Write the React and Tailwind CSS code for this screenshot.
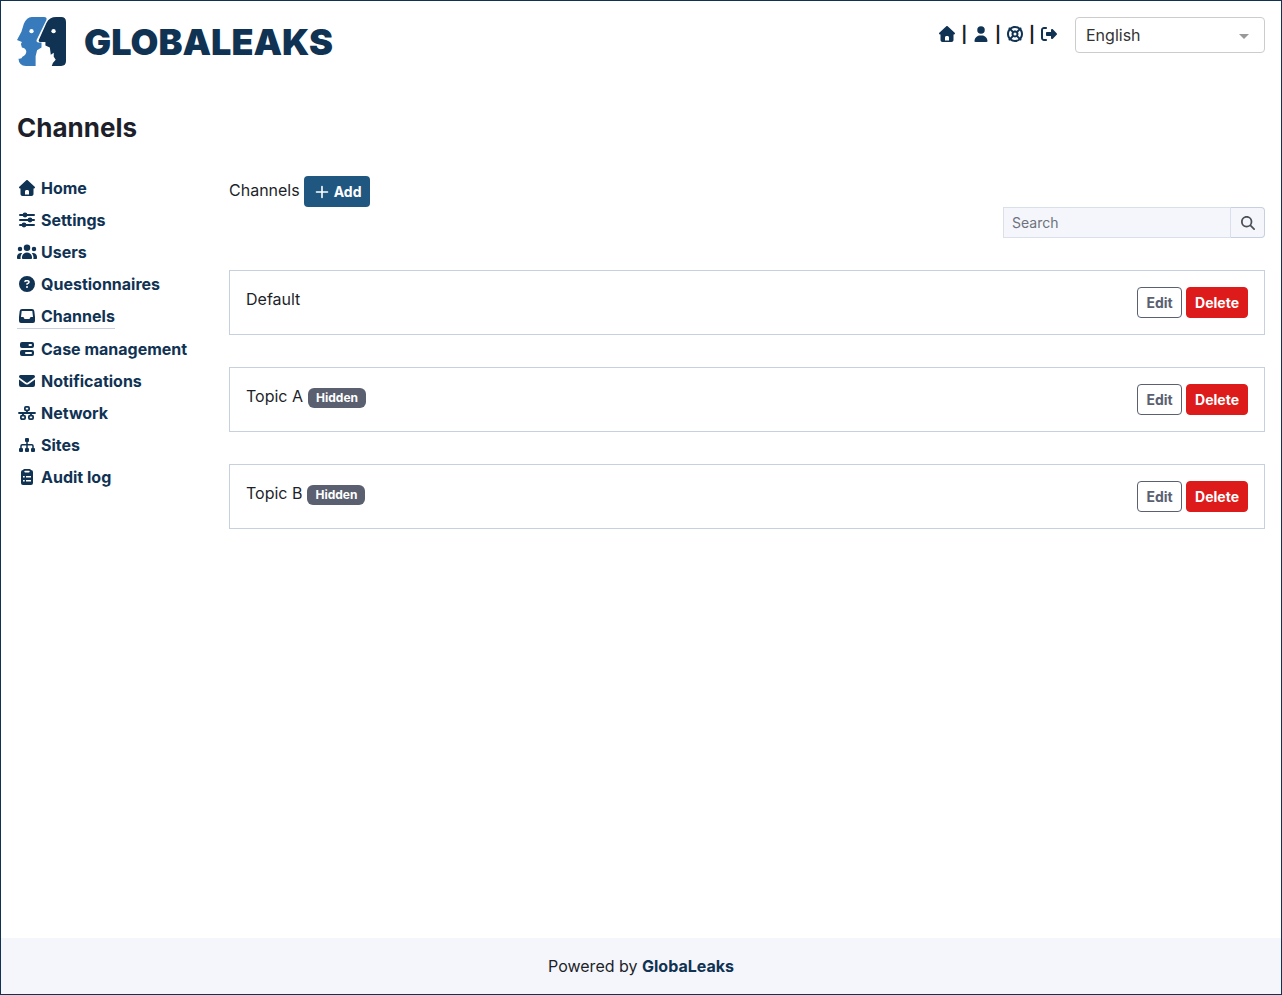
import React from "react";
import { FaCircleQuestion, FaLifeRing, FaRightFromBracket, FaMagnifyingGlass } from "react-icons/fa6";

function HouseIcon() {
  return (
    <svg viewBox="0 0 512 512" fill="currentColor" aria-hidden="true" className="size-4">
      <path d="M277.8 8.6c-12.3-11.4-31.3-11.4-43.5 0l-224 208c-9.6 9-12.8 22.9-8 35.1S18.8 272 32 272l16 0 0 176c0 35.3 28.7 64 64 64l288 0c35.3 0 64-28.7 64-64l0-176 16 0c13.2 0 25-8.1 29.8-20.3s1.6-26.2-8-35.1l-224-208zM240 320l32 0c26.5 0 48 21.5 48 48l0 96-128 0 0-96c0-26.5 21.5-48 48-48z" />
    </svg>
  );
}

function UserIcon() {
  return (
    <svg viewBox="-32 0 512 512" fill="currentColor" aria-hidden="true" className="size-4">
      <path d="M224 248a120 120 0 1 0 0-240 120 120 0 1 0 0 240zm-29.7 56C95.8 304 16 383.8 16 482.3 16 498.7 29.3 512 45.7 512l356.6 0c16.4 0 29.7-13.3 29.7-29.7 0-98.5-79.8-178.3-178.3-178.3l-59.4 0z" />
    </svg>
  );
}

function UsersIcon() {
  return (
    <svg viewBox="0 0 640 512" fill="currentColor" aria-hidden="true" className="h-4 w-5">
      <path d="M320 16a104 104 0 1 1 0 208 104 104 0 1 1 0-208zM96 88a72 72 0 1 1 0 144 72 72 0 1 1 0-144zM0 416c0-70.7 57.3-128 128-128 12.8 0 25.2 1.9 36.9 5.4-32.9 36.8-52.9 85.4-52.9 138.6l0 16c0 11.4 2.4 22.2 6.7 32L32 480c-17.7 0-32-14.3-32-32l0-32zm521.3 64c4.3-9.8 6.7-20.6 6.7-32l0-16c0-53.2-20-101.8-52.9-138.6 11.7-3.5 24.1-5.4 36.9-5.4 70.7 0 128 57.3 128 128l0 32c0 17.7-14.3 32-32 32l-86.7 0zM472 160a72 72 0 1 1 144 0 72 72 0 1 1 -144 0zM160 432c0-88.4 71.6-160 160-160s160 71.6 160 160l0 16c0 17.7-14.3 32-32 32l-256 0c-17.7 0-32-14.3-32-32l0-16z" />
    </svg>
  );
}

function SlidersIcon() {
  return (
    <svg viewBox="0 0 16 16" fill="currentColor" aria-hidden="true" className="size-4">
      <path d="M1 3h14M1 8h14M1 13h14" stroke="currentColor" strokeWidth="2" strokeLinecap="round" />
      <circle cx="6" cy="3" r="2.400" />
      <circle cx="11" cy="8" r="2.400" />
      <circle cx="5" cy="13" r="2.400" />
    </svg>
  );
}

function InboxIcon() {
  return (
    <svg viewBox="0 0 16 16" fill="currentColor" aria-hidden="true" className="size-4">
      <path
        fillRule="evenodd"
        d="M3 1H13Q15 1 15.300 3L16 9V13Q16 15 14 15H2Q0 15 0 13V9L.7 3Q1 1 3 1ZM2.700 3L2 9H4.400L5.600 11H10.400L11.600 9H14L13.300 3Z"
      />
    </svg>
  );
}

function ServerIcon() {
  return (
    <svg viewBox="0 0 14 16" fill="currentColor" aria-hidden="true" className="h-4 w-[14px]">
      <path
        fillRule="evenodd"
        d="M2 1H12Q14 1 14 3V5Q14 7 12 7H2Q0 7 0 5V3Q0 1 2 1ZM9.500 3Q8.500 3 8.500 4Q8.500 5 9.500 5H11Q12 5 12 4Q12 3 11 3ZM2 9H12Q14 9 14 11V13Q14 15 12 15H2Q0 15 0 13V11Q0 9 2 9ZM6 11Q5 11 5 12Q5 13 6 13H11Q12 13 12 12Q12 11 11 11Z"
      />
    </svg>
  );
}

function EnvelopeIcon() {
  return (
    <svg viewBox="0 0 16 16" fill="currentColor" aria-hidden="true" className="size-4">
      <path d="M1.500 2H14.500Q16 2 16 3.500Q16 4.200 15.400 4.700L8.900 9.500Q8 10.100 7.100 9.500L.6 4.700Q0 4.200 0 3.500Q0 2 1.500 2ZM0 6.400L6.200 10.900Q8 12 9.800 10.900L16 6.400V12Q16 14 14 14H2Q0 14 0 12Z" />
    </svg>
  );
}

function NetworkIcon() {
  return (
    <svg viewBox="0 0 18 16" fill="none" stroke="currentColor" aria-hidden="true" className="h-4 w-[18px]">
      <path d="M1 8H17" strokeWidth="1.800" strokeLinecap="round" />
      <path d="M9 5.500V8M5 8V10.500M13 8V10.500" strokeWidth="1.800" />
      <rect x="6.900" y="1.900" width="4.200" height="3.400" rx="1" strokeWidth="1.800" />
      <rect x="2.900" y="10.700" width="4.200" height="3.400" rx="1" strokeWidth="1.800" />
      <rect x="10.900" y="10.700" width="4.200" height="3.400" rx="1" strokeWidth="1.800" />
    </svg>
  );
}

function SitemapIcon() {
  return (
    <svg viewBox="0 0 16 16" fill="currentColor" aria-hidden="true" className="size-4">
      <path
        d="M8 4V12M2 12V9Q2 7.800 3.200 7.800H12.800Q14 7.800 14 9V12"
        fill="none"
        stroke="currentColor"
        strokeWidth="1.500"
      />
      <rect x="6" y="1" width="4" height="4" rx="1" />
      <rect x="0" y="11" width="4" height="4" rx="1" />
      <rect x="6" y="11" width="4" height="4" rx="1" />
      <rect x="12" y="11" width="4" height="4" rx="1" />
    </svg>
  );
}

function ClipboardIcon() {
  return (
    <svg viewBox="0 0 12 16" fill="currentColor" aria-hidden="true" className="h-4 w-3">
      <path
        fillRule="evenodd"
        d="M3.500 0H8.500Q9.500 0 10 1Q12 1 12 3V14Q12 16 10 16H2Q0 16 0 14V3Q0 1 2 1Q2.500 0 3.500 0ZM4 1.800Q3.300 1.800 3.300 2.600Q3.300 3.400 4 3.400H8Q8.700 3.400 8.700 2.600Q8.700 1.800 8 1.800ZM2 7V8.600H3.700V7ZM5 7V8.400H10V7ZM2 10.900V12.500H3.700V10.900ZM5 11V12.400H10V11Z"
      />
    </svg>
  );
}

function LogoMark() {
  return (
    <svg viewBox="0 0 50 50" aria-hidden="true" className="size-[49px]">
      <path
        fill="#377bbc"
        d="M15 0H27.500Q31 0 30 3L20 23.500Q19.500 26 22 26H25V31L20.500 34L19 40V50H9Q2 49.500 1.500 42.500Q5 43 5.500 40.500Q9.500 39 9.500 35Q9 31.500 5 31L4 27.500L5 25.500L0 23.500L4.500 15L7 7Q10 0 15 0Z"
      />
      <path
        fill="#103253"
        d="M40 0H45Q50 0 50 5V45Q50 50 45 50H35.500Q36.500 46 39.500 43.500L37.500 40.500V36.500L34.500 38.500L33.500 31L29 29V25.500H23L22 24L26 15L30 6Q33 0 40 0Z"
      />
      <circle cx="14.800" cy="14.500" r="2.200" fill="#fff" />
      <circle cx="37.300" cy="14.500" r="2.200" fill="#fff" />
    </svg>
  );
}

const navItems = [
  { label: "Home", icon: <HouseIcon /> },
  { label: "Settings", icon: <SlidersIcon /> },
  { label: "Users", icon: <UsersIcon /> },
  { label: "Questionnaires", icon: <FaCircleQuestion /> },
  { label: "Channels", icon: <InboxIcon />, active: true },
  { label: "Case management", icon: <ServerIcon /> },
  { label: "Notifications", icon: <EnvelopeIcon /> },
  { label: "Network", icon: <NetworkIcon /> },
  { label: "Sites", icon: <SitemapIcon /> },
  { label: "Audit log", icon: <ClipboardIcon /> },
];

const userLinks = [
  { label: "Home", icon: <HouseIcon /> },
  { label: "Preferences", icon: <UserIcon /> },
  { label: "Support", icon: <FaLifeRing /> },
  { label: "Logout", icon: <FaRightFromBracket /> },
];

const channels = [
  { name: "Default", hidden: false },
  { name: "Topic A", hidden: true },
  { name: "Topic B", hidden: true },
];

function Header() {
  return (
    <header className="flex items-start justify-between">
      <a href="#home" aria-label="GlobaLeaks" className="flex items-start gap-[18px] text-[#103253]">
        <LogoMark />
        <span className="text-4xl leading-[50px] font-black">GLOBALEAKS</span>
      </a>
      <div className="flex items-start gap-4">
        <nav aria-label="User" className="flex h-[34px] items-center">
          {userLinks.map((link, i) => (
            <React.Fragment key={link.label}>
              {i > 0 && <span className="mx-1 font-bold">|</span>}
              <a href="#user" aria-label={link.label} className="flex w-5 justify-center text-[#103253]">
                {link.icon}
              </a>
            </React.Fragment>
          ))}
        </nav>
        <div className="relative">
          <select
            aria-label="Language"
            className="h-9 w-[190px] appearance-none rounded border border-[#ccc] bg-white pr-8 pl-[10px] text-[#333]"
          >
            <option>English</option>
          </select>
          <svg
            viewBox="0 0 10 5"
            aria-hidden="true"
            className="pointer-events-none absolute top-[17px] right-4 h-[5px] w-[10px]"
          >
            <path d="M0 0H10L5 5Z" fill="#999" />
          </svg>
        </div>
      </div>
    </header>
  );
}

function Sidebar() {
  return (
    <nav aria-label="Administration" className="w-[196px] shrink-0">
      <ul className="flex flex-col items-start gap-2">
        {navItems.map((item) => (
          <li key={item.label} className={item.active ? "border-b border-[#c6d0de]" : ""}>
            <a href="#nav" className="flex items-center gap-1 font-bold text-[#103253]">
              <span className="flex w-5 justify-center">{item.icon}</span>
              {item.label}
            </a>
          </li>
        ))}
      </ul>
    </nav>
  );
}

function ChannelCard({ channel }) {
  return (
    <li className="flex items-start justify-between border border-[#c6d0de] p-4">
      <div className="flex items-center gap-[5px]">
        <span>{channel.name}</span>
        {channel.hidden && (
          <span className="mt-1 rounded-md bg-[#5a6070] px-2 text-xs leading-5 font-bold text-white">
            Hidden
          </span>
        )}
      </div>
      <div className="flex gap-1 text-sm font-bold">
        <button type="button" className="h-[31px] min-w-[45px] rounded border border-[#5a6070] px-2 text-[#5a6070]">
          Edit
        </button>
        <button type="button" className="h-[31px] rounded border border-[#de1b1b] bg-[#de1b1b] px-2 text-white">
          Delete
        </button>
      </div>
    </li>
  );
}

export default function App() {
  return (
    <div className="flex min-h-screen flex-col border border-[#103253] bg-white font-['Inter',sans-serif] text-base text-[#1d1f2a]">
      <div className="flex grow flex-col p-4">
        <Header />
        <h1 className="mt-[45px] text-[26px] leading-8 font-bold">Channels</h1>
        <div className="mt-8 flex gap-4">
          <Sidebar />
          <main className="min-w-0 grow">
            <div className="flex items-start gap-1">
              <h2 className="leading-7">Channels</h2>
              <button
                type="button"
                className="flex h-[31px] items-center gap-[3px] rounded bg-[#205781] px-[9px] text-sm font-bold text-white"
              >
                <svg viewBox="0 0 18 18" aria-hidden="true" className="size-[18px]">
                  <path d="M9 3.500v11M3.500 9h11" stroke="currentColor" strokeWidth="1.600" strokeLinecap="round" />
                </svg>
                Add
              </button>
            </div>
            <form className="flex justify-end">
              <input
                type="text"
                aria-label="Search"
                placeholder="Search"
                className="h-[31px] w-[228px] border border-[#d9e0ea] bg-[#f5f6fb] px-2 text-sm placeholder:text-[#6d727c]"
              />
              <button
                type="button"
                aria-label="Search"
                className="flex h-[31px] w-[34px] items-center justify-center rounded-r border border-l-0 border-[#c6d0de] bg-[#f5f6fb] text-sm text-[#495057]"
              >
                <FaMagnifyingGlass />
              </button>
            </form>
            <ul className="mt-8 flex flex-col gap-8">
              {channels.map((channel) => (
                <ChannelCard key={channel.name} channel={channel} />
              ))}
            </ul>
          </main>
        </div>
      </div>
      <footer className="bg-[#f5f6fb] p-4 text-center">
        Powered by{" "}
        <a href="#globaleaks" className="font-bold text-[#103253]">
          GlobaLeaks
        </a>
      </footer>
    </div>
  );
}
